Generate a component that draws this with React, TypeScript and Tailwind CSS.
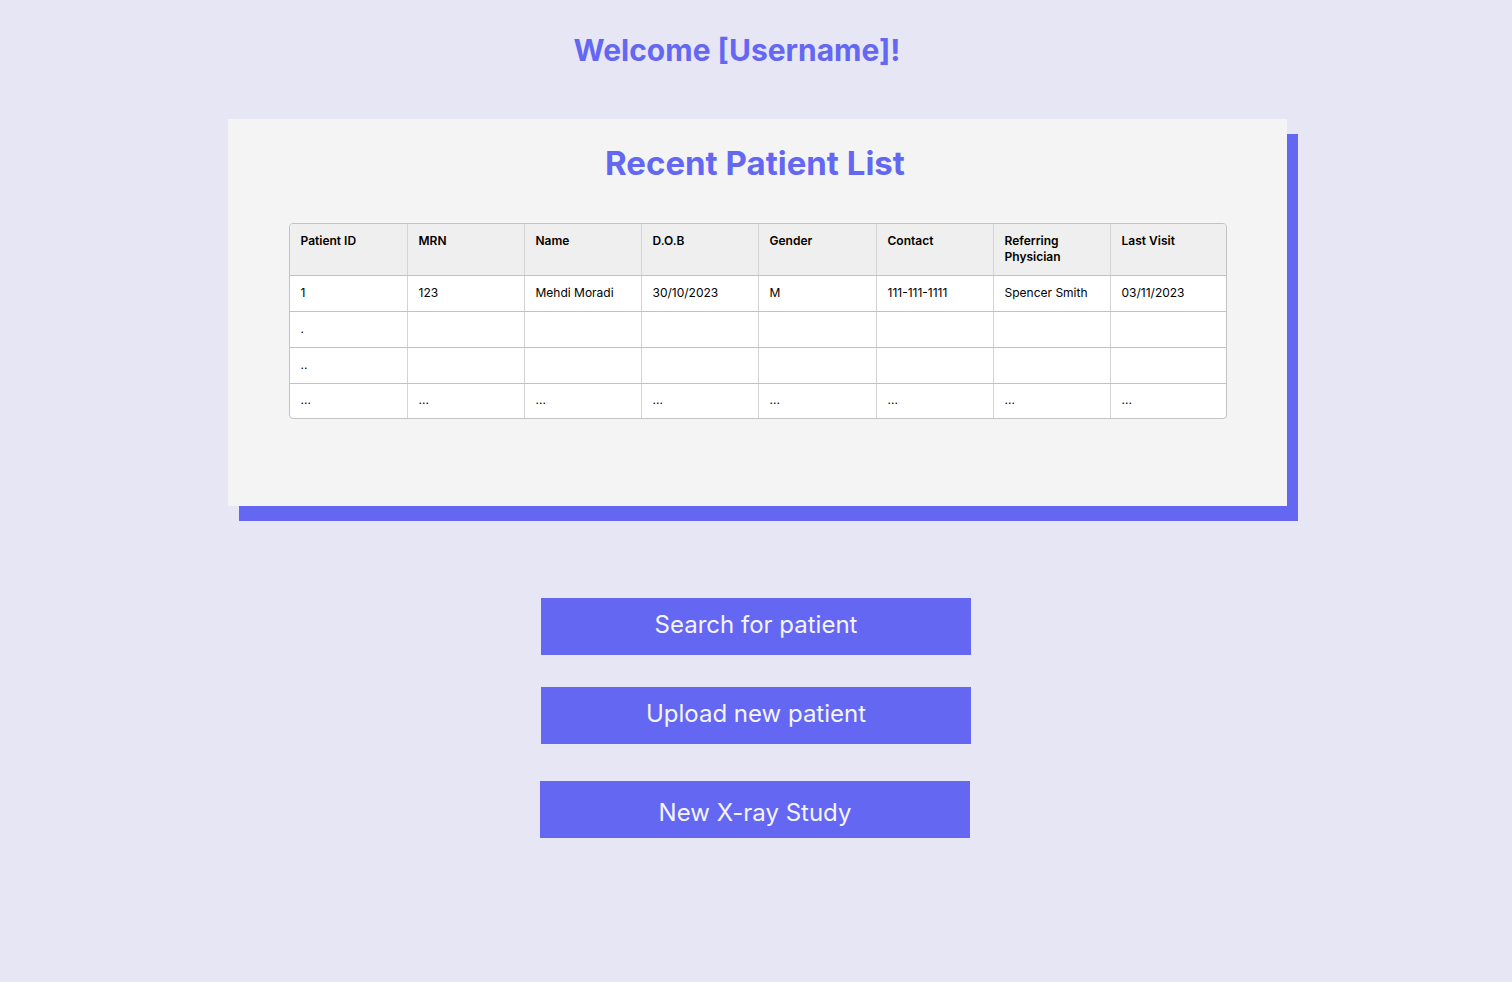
const headers = ["Patient ID", "MRN", "Name", "D.O.B", "Gender", "Contact", "Referring Physician", "Last Visit"]

const rows = [
    ["1", "123", "Mehdi Moradi", "30/10/2023", "M", "111-111-1111", "Spencer Smith", "03/11/2023"],
    [".", "", "", "", "", "", "", ""],
    ["..", "", "", "", "", "", "", ""],
    ["...", "...", "...", "...", "...", "...", "...", "..."],
]

const cols = "grid grid-cols-[118px_117px_117px_117px_118px_117px_117px_1fr]"

function PatientTable() {
    return (
        <div className="w-[938px] mx-auto border border-[#c2c2c2] rounded-[4px] overflow-hidden bg-white text-[12px] leading-4 text-black">
            <div className={`${cols} h-[52px] bg-[#efefef] border-b border-[#c2c2c2]`}>
                {headers.map((h, i) => (
                    <div key={h} className={`pl-[11px] pr-2 pt-[9px] font-semibold ${i < 7 ? "border-r border-[#d4d4d4]" : ""}`}>{h}</div>
                ))}
            </div>
            {rows.map((r, ri) => (
                <div key={ri} className={`${cols} ${ri < rows.length - 1 ? "h-[36px] border-b border-[#c2c2c2]" : "h-[34px]"}`}>
                    {r.map((c, i) => (
                        <div key={i} className={`pl-[11px] pb-[2px] flex items-center ${i < 7 ? "border-r border-[#d4d4d4]" : ""}`}>{c}</div>
                    ))}
                </div>
            ))}
        </div>
    )
}

function ActionButton(props: { label: string; className?: string }) {
    return (
        <button className={`w-[430px] h-[57px] bg-[#6467f2] text-[#f4f4ff] text-[24px] font-normal ${props.className ?? ""}`}>
            {props.label}
        </button>
    )
}

export default function App() {
    return (
        <div className="min-h-screen bg-[#e7e6f4] font-['Inter','Noto_Sans',sans-serif] flex flex-col items-center pt-[32px] pb-20">
            <h1 className="text-[30px] leading-9 font-bold text-[#6467f2] pr-[38px]">Welcome [Username]!</h1>

            <div className="mt-[51px] w-[1059px] h-[387px] bg-[#f4f4f4] shadow-[11px_15px_0_#6467f2] pt-[24px] ml-[3px]">
                <h2 className="text-center text-[33px] leading-10 font-bold text-[#6467f2] pr-[5px]">Recent Patient List</h2>
                <div className="mt-[40px]">
                    <PatientTable />
                </div>
            </div>

            <div className="mt-[92px] flex flex-col items-center">
                <ActionButton label="Search for patient" className="pb-[3px]" />
                <ActionButton label="Upload new patient" className="mt-[32px] pb-[3px]" />
                <ActionButton label="New X-ray Study" className="mt-[37px] mr-[2px] pt-[6px]" />
            </div>
        </div>
    )
}
